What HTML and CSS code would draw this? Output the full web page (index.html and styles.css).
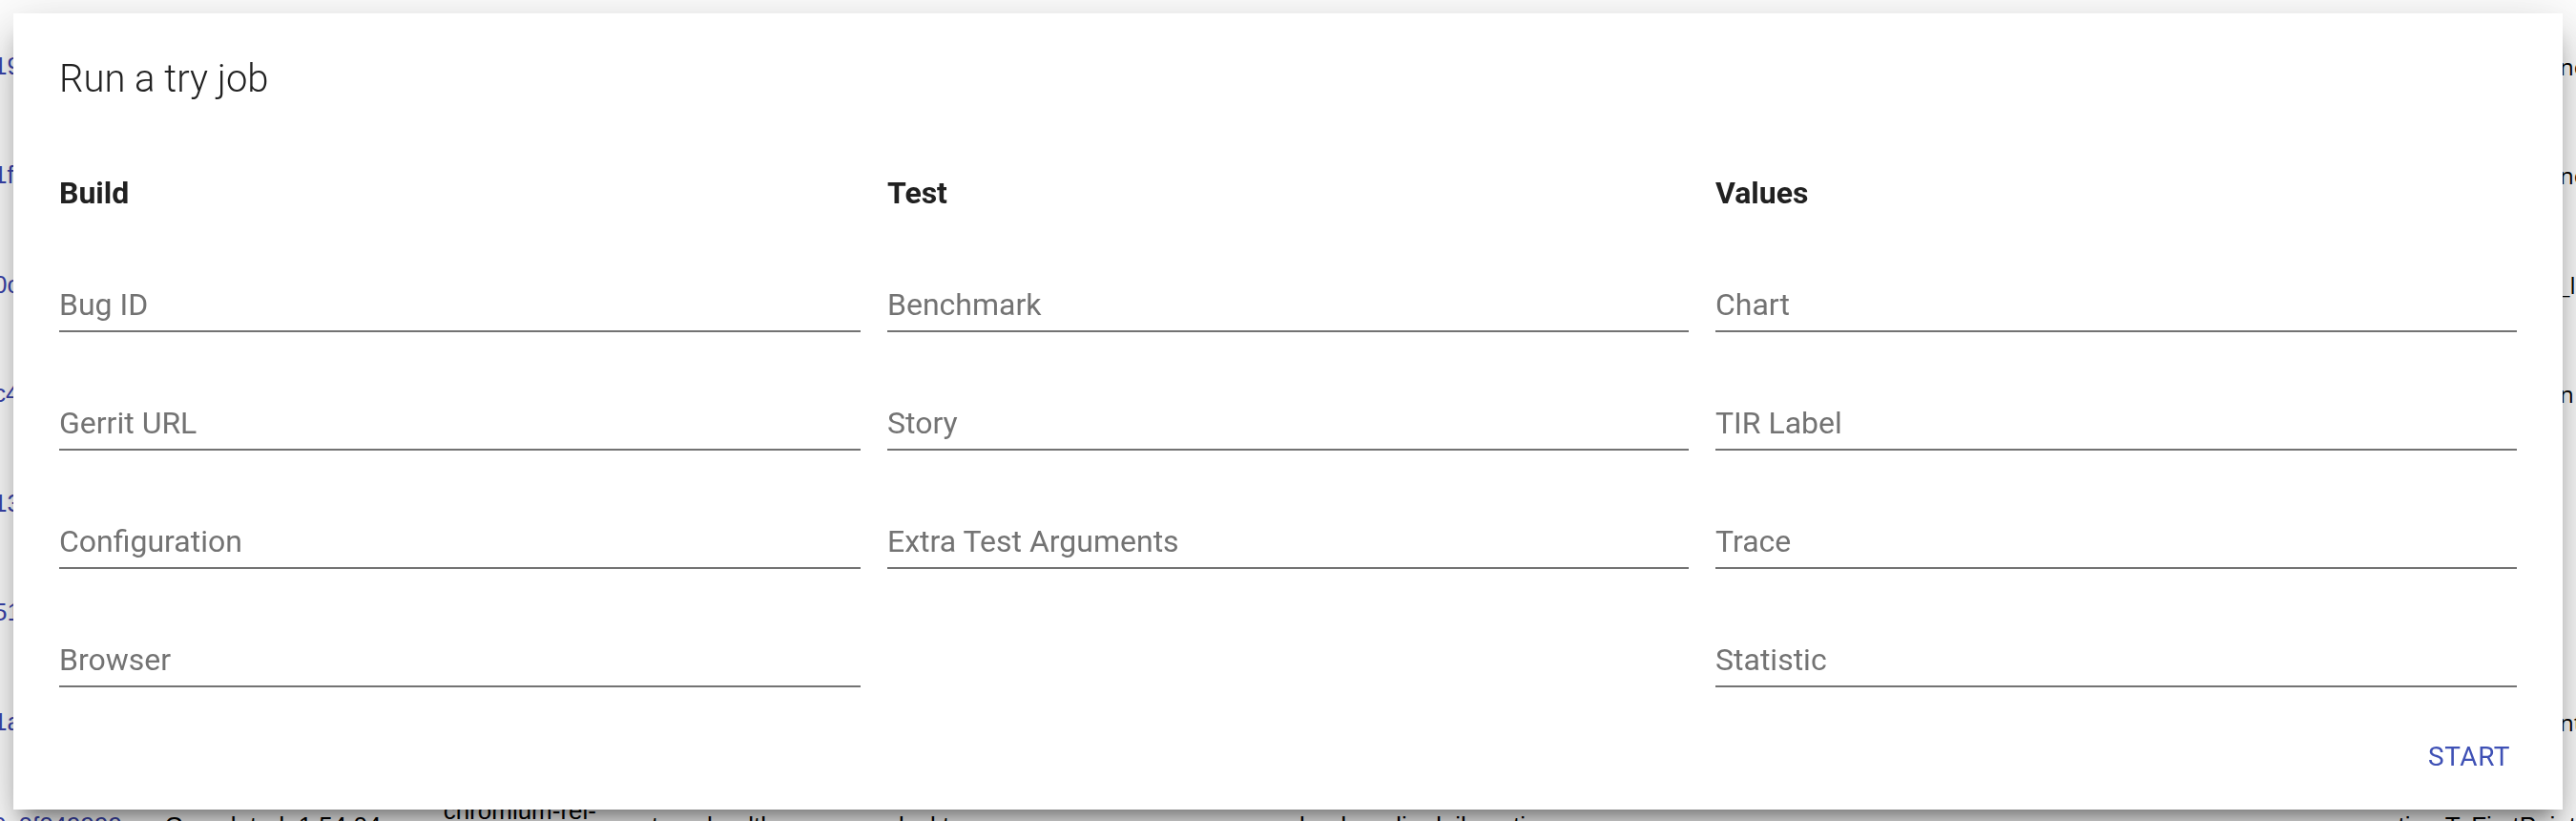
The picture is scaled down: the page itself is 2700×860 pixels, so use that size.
FILE: index.html
```html
<!DOCTYPE html>
<html>
<head>
<meta charset="utf-8">
<title>Run a try job</title>
<link rel="stylesheet" href="styles.css">
</head>
<body>
<div class="page">
  <div class="row"><span class="hash">19</span><span class="rest"></span><span class="tail">ne</span></div>
  <div class="row"><span class="hash">1f</span><span class="rest"></span><span class="tail">ne</span></div>
  <div class="row"><span class="hash">0c</span><span class="rest"></span><span class="tail">_l</span></div>
  <div class="row"><span class="hash">c4</span><span class="rest"></span><span class="tail">n</span></div>
  <div class="row"><span class="hash">13</span><span class="rest"></span><span class="tail"></span></div>
  <div class="row"><span class="hash">51</span><span class="rest"></span><span class="tail"></span></div>
  <div class="row"><span class="hash">1a</span><span class="rest"></span><span class="tail">nt</span></div>
  <div class="row last">
    <span class="hash">0c0f049999</span>
    <span class="status">Completed: 1.54.04</span>
    <span class="bot">chromium-rel-<br>mac11</span>
    <span class="desc">system_health.common_desktop</span>
    <span class="story">load:media:dailymotion</span>
    <span class="metric">timeToFirstPaint</span>
  </div>
</div>

<div class="dialog">
  <h2 class="title">Run a try job</h2>
  <div class="columns">
    <div class="col">
      <div class="heading">Build</div>
      <div class="field"><span class="label">Bug ID</span></div>
      <div class="field"><span class="label">Gerrit URL</span></div>
      <div class="field"><span class="label">Configuration</span></div>
      <div class="field"><span class="label">Browser</span></div>
    </div>
    <div class="col">
      <div class="heading">Test</div>
      <div class="field"><span class="label">Benchmark</span></div>
      <div class="field"><span class="label">Story</span></div>
      <div class="field"><span class="label">Extra Test Arguments</span></div>
    </div>
    <div class="col">
      <div class="heading">Values</div>
      <div class="field"><span class="label">Chart</span></div>
      <div class="field"><span class="label">TIR Label</span></div>
      <div class="field"><span class="label">Trace</span></div>
      <div class="field"><span class="label">Statistic</span></div>
    </div>
  </div>
  <div class="buttons"><button class="start">START</button></div>
</div>
</body>
</html>
```
FILE: styles.css
```css
html, body {
  margin: 0;
  padding: 0;
  background: #ffffff;
  overflow: hidden;
  height: 860px;
}

.page {
  padding-top: 12px;
  font-family: "Liberation Sans", Arial, sans-serif;
  font-size: 26px;
  color: #000;
}

.row {
  height: 114.5px;
  display: flex;
  align-items: center;
}

.hash {
  color: #3a44ad;
  width: 160px;
  margin-left: -7px;
  white-space: nowrap;
  overflow: hidden;
}

.rest {
  flex: 1;
}

.tail {
  font-family: "Open Sans", sans-serif;
  font-size: 24px;
  width: 17px;
  white-space: nowrap;
}

.row.last {
  align-items: flex-start;
  padding-top: 36px;
  box-sizing: border-box;
}

.row.last .hash { width: 173px; margin-left: 0; text-indent: -8px; }
.status { width: 293px; white-space: nowrap; }
.bot { width: 180px; margin-top: -14px; line-height: 26px; white-space: nowrap; }
.desc { width: 720px; white-space: nowrap; }
.story { width: 1155px; white-space: nowrap; }
.metric { white-space: nowrap; }

.dialog {
  position: fixed;
  top: 14px;
  left: 14px;
  width: 2672px;
  height: 834px;
  box-sizing: border-box;
  background: #ffffff;
  padding: 49px 48px 0 48px;
  font-family: Roboto, "Noto Sans", sans-serif;
  box-shadow: 0 32px 48px 4px rgba(0,0,0,0.14),
              0 12px 60px 10px rgba(0,0,0,0.12),
              0 16px 20px -10px rgba(0,0,0,0.45);
  display: flex;
  flex-direction: column;
}

.title {
  margin: 0;
  font-size: 40px;
  line-height: 40px;
  font-weight: 300;
  color: #212121;
}

.columns {
  margin-top: 83px;
  display: grid;
  grid-template-columns: repeat(3, 1fr);
  column-gap: 28px;
}

.col {
  display: flex;
  flex-direction: column;
}

.heading {
  font-size: 32px;
  line-height: 32px;
  font-weight: 700;
  color: #212121;
  margin-bottom: 6px;
}

.field {
  padding-top: 79px;
  padding-bottom: 11px;
  border-bottom: 2px solid #737373;
}

.label {
  display: block;
  font-size: 32px;
  line-height: 32px;
  color: #737373;
}

.buttons {
  margin-top: 39px;
  margin-right: -17px;
  display: flex;
  justify-content: flex-end;
}

.start {
  font-family: Roboto, "Noto Sans", sans-serif;
  font-size: 28px;
  line-height: 28px;
  font-weight: 400;
  letter-spacing: 0.5px;
  color: #3f51b5;
  background: transparent;
  border: 0;
  padding: 19.6px 16px;
  margin: 0 8px;
}
```
